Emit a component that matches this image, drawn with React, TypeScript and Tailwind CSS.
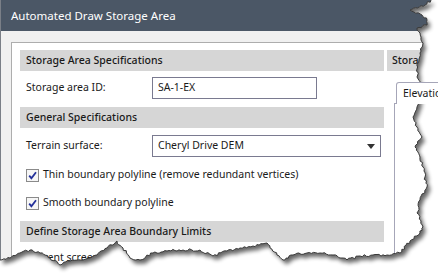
const RIGHT: [number, number][] = [
  [431, 0], [425, 5], [410, 10], [422, 15], [427, 20], [427, 25], [417, 28], [420, 33],
  [423, 43], [420, 53], [418, 63], [417, 77], [423, 87], [420, 97], [417, 107], [413, 117],
  [417, 127], [422, 137], [415, 147], [420, 157], [423, 167], [425, 177], [427, 187],
  [420, 200], [417, 213], [423, 227], [420, 233], [410, 241], [400, 253],
]

const BOTTOM: [number, number][] = [
  [387, 255], [373, 255], [360, 256], [347, 260], [333, 255], [320, 253], [307, 253],
  [293, 255], [283, 260], [277, 255], [267, 243], [253, 246], [240, 248], [227, 251],
  [213, 256], [200, 250], [183, 250], [167, 251], [153, 253], [140, 260], [130, 258],
  [123, 248], [117, 241], [107, 248], [97, 255], [83, 260], [70, 261], [60, 265],
  [50, 258], [40, 253], [30, 250], [20, 253], [10, 258], [0, 260],
]

// rough torn edge: split every segment and jiggle the points a little
function tornPoints() {
  const keys = [...RIGHT, ...BOTTOM]
  let seed = 7
  const rnd = () => {
    seed = (seed * 16807) % 2147483647
    return seed / 2147483647 - 0.5
  }
  const out: [number, number][] = [keys[0]]
  for (let i = 1; i < keys.length; i++) {
    const [x0, y0] = keys[i - 1]
    const [x1, y1] = keys[i]
    const len = Math.hypot(x1 - x0, y1 - y0)
    const n = Math.max(1, Math.ceil(len / 2.2))
    const nx = -(y1 - y0) / len
    const ny = (x1 - x0) / len
    for (let k = 1; k <= n; k++) {
      const t = k / n
      const j = k === n ? 0 : rnd() * 2.4
      out.push([x0 + (x1 - x0) * t + nx * j, y0 + (y1 - y0) * t + ny * j])
    }
  }
  return out
}

const TornEdge = () => {
  const pts = tornPoints()
  const edge = pts.map(([x, y], i) => `${i ? 'L' : 'M'}${x.toFixed(1)} ${y.toFixed(1)}`).join(' ')
  const paper = `M0 0 ${edge.replace('M', 'L')} Z`
  const outside = `M0 0 H438 V276 H0 Z ${paper}`
  return (
    <svg className="absolute inset-0 pointer-events-none" width={438} height={276}>
      <defs>
        <clipPath id="out">
          <path d={outside} clipRule="evenodd" />
        </clipPath>
        <filter id="blur" x="-10%" y="-10%" width="120%" height="120%">
          <feGaussianBlur stdDeviation="2.2" />
        </filter>
      </defs>
      <path d={outside} fill="#ffffff" fillRule="evenodd" />
      <g clipPath="url(#out)">
        <path d={paper} transform="translate(3 4)" fill="#000" opacity="0.6" filter="url(#blur)" />
      </g>
      <path d={edge} fill="none" stroke="#3a3a3a" strokeWidth="1" />
    </svg>
  )
}

const Header = ({ title }: { title: string }) => (
  <div className="h-[21px] bg-[#d6d6d6] pl-[6px] flex items-center font-medium text-[#1a1a1a] whitespace-nowrap">
    {title}
  </div>
)

const Check = ({ label }: { label: string }) => (
  <div className="h-[20px] flex items-center pl-[6px] gap-[4px]">
    <div className="w-[13px] h-[13px] border border-[#8a8a8a] bg-[#f6f6f6] flex items-center justify-center">
      <svg width="11" height="11" viewBox="0 0 11 11">
        <path d="M2.2 5.6 L4.4 8.2 L9 2.2" fill="none" stroke="#23309a" strokeWidth="1.8" />
      </svg>
    </div>
    <span className="whitespace-nowrap">{label}</span>
  </div>
)

export default function App() {
  return (
    <div className="relative w-[438px] h-[276px] overflow-hidden bg-white font-['Noto_Sans',sans-serif]">
      <div className="flex flex-col h-full border-l border-[#7a7f87]">
        <div className="h-[31px] shrink-0 bg-[#4b5766] text-white text-[11.5px] pl-[10px] flex items-center">
          Automated Draw Storage Area
        </div>
        <div className="flex-1 bg-[#f0f0f0] pl-[10px] pt-[11px]">
          <div className="h-[300px] w-[470px] border border-[#adadad] bg-white flex pt-[7px] pl-[8px] gap-[3px] text-[10.5px] text-[#1a1a1a]">
            <div className="w-[364px] shrink-0 flex flex-col">
              <Header title="Storage Area Specifications" />
              <div className="mt-[6px] h-[22px] flex items-center">
                <span className="w-[132px] pl-[6px]">Storage area ID:</span>
                <div className="w-[165px] h-full border border-[#7a7a90] flex items-center pl-[5px]">SA-1-EX</div>
              </div>
              <div className="mt-[8px]">
                <Header title="General Specifications" />
              </div>
              <div className="mt-[7px] h-[22px] flex items-center">
                <span className="w-[132px] pl-[6px]">Terrain surface:</span>
                <div className="w-[229px] h-full border border-[#7a7a90] flex items-center justify-between pl-[5px] pr-[5px]">
                  <span>Cheryl Drive DEM</span>
                  <svg width="8" height="5" viewBox="0 0 8 5">
                    <path d="M0 0 H8 L4 5 Z" fill="#333" />
                  </svg>
                </div>
              </div>
              <div className="mt-[8px]">
                <Check label="Thin boundary polyline (remove redundant vertices)" />
              </div>
              <div className="mt-[8px]">
                <Check label="Smooth boundary polyline" />
              </div>
              <div className="mt-[8px]">
                <Header title="Define Storage Area Boundary Limits" />
              </div>
              <div className="mt-[6px] h-[20px] flex items-center pl-[6px]">Current screen limits</div>
            </div>
            <div className="flex-1 flex flex-col">
              <div className="h-[21px] bg-[#d6d6d6] pl-[5px] flex items-center font-medium whitespace-nowrap">Storage Area Elevations</div>
              <div className="mt-[11px] pl-[7px]">
                <div className="ml-[2px] relative z-10 -mb-px w-[90px] h-[22px] bg-white border border-b-0 border-[#a6a6b8] rounded-t-[3px] flex items-center pl-[6px]">
                  Elevation
                </div>
                <div className="h-[200px] border-l border-t border-[#a6a6b8]" />
              </div>
            </div>
          </div>
        </div>
      </div>
      <TornEdge />
    </div>
  )
}
